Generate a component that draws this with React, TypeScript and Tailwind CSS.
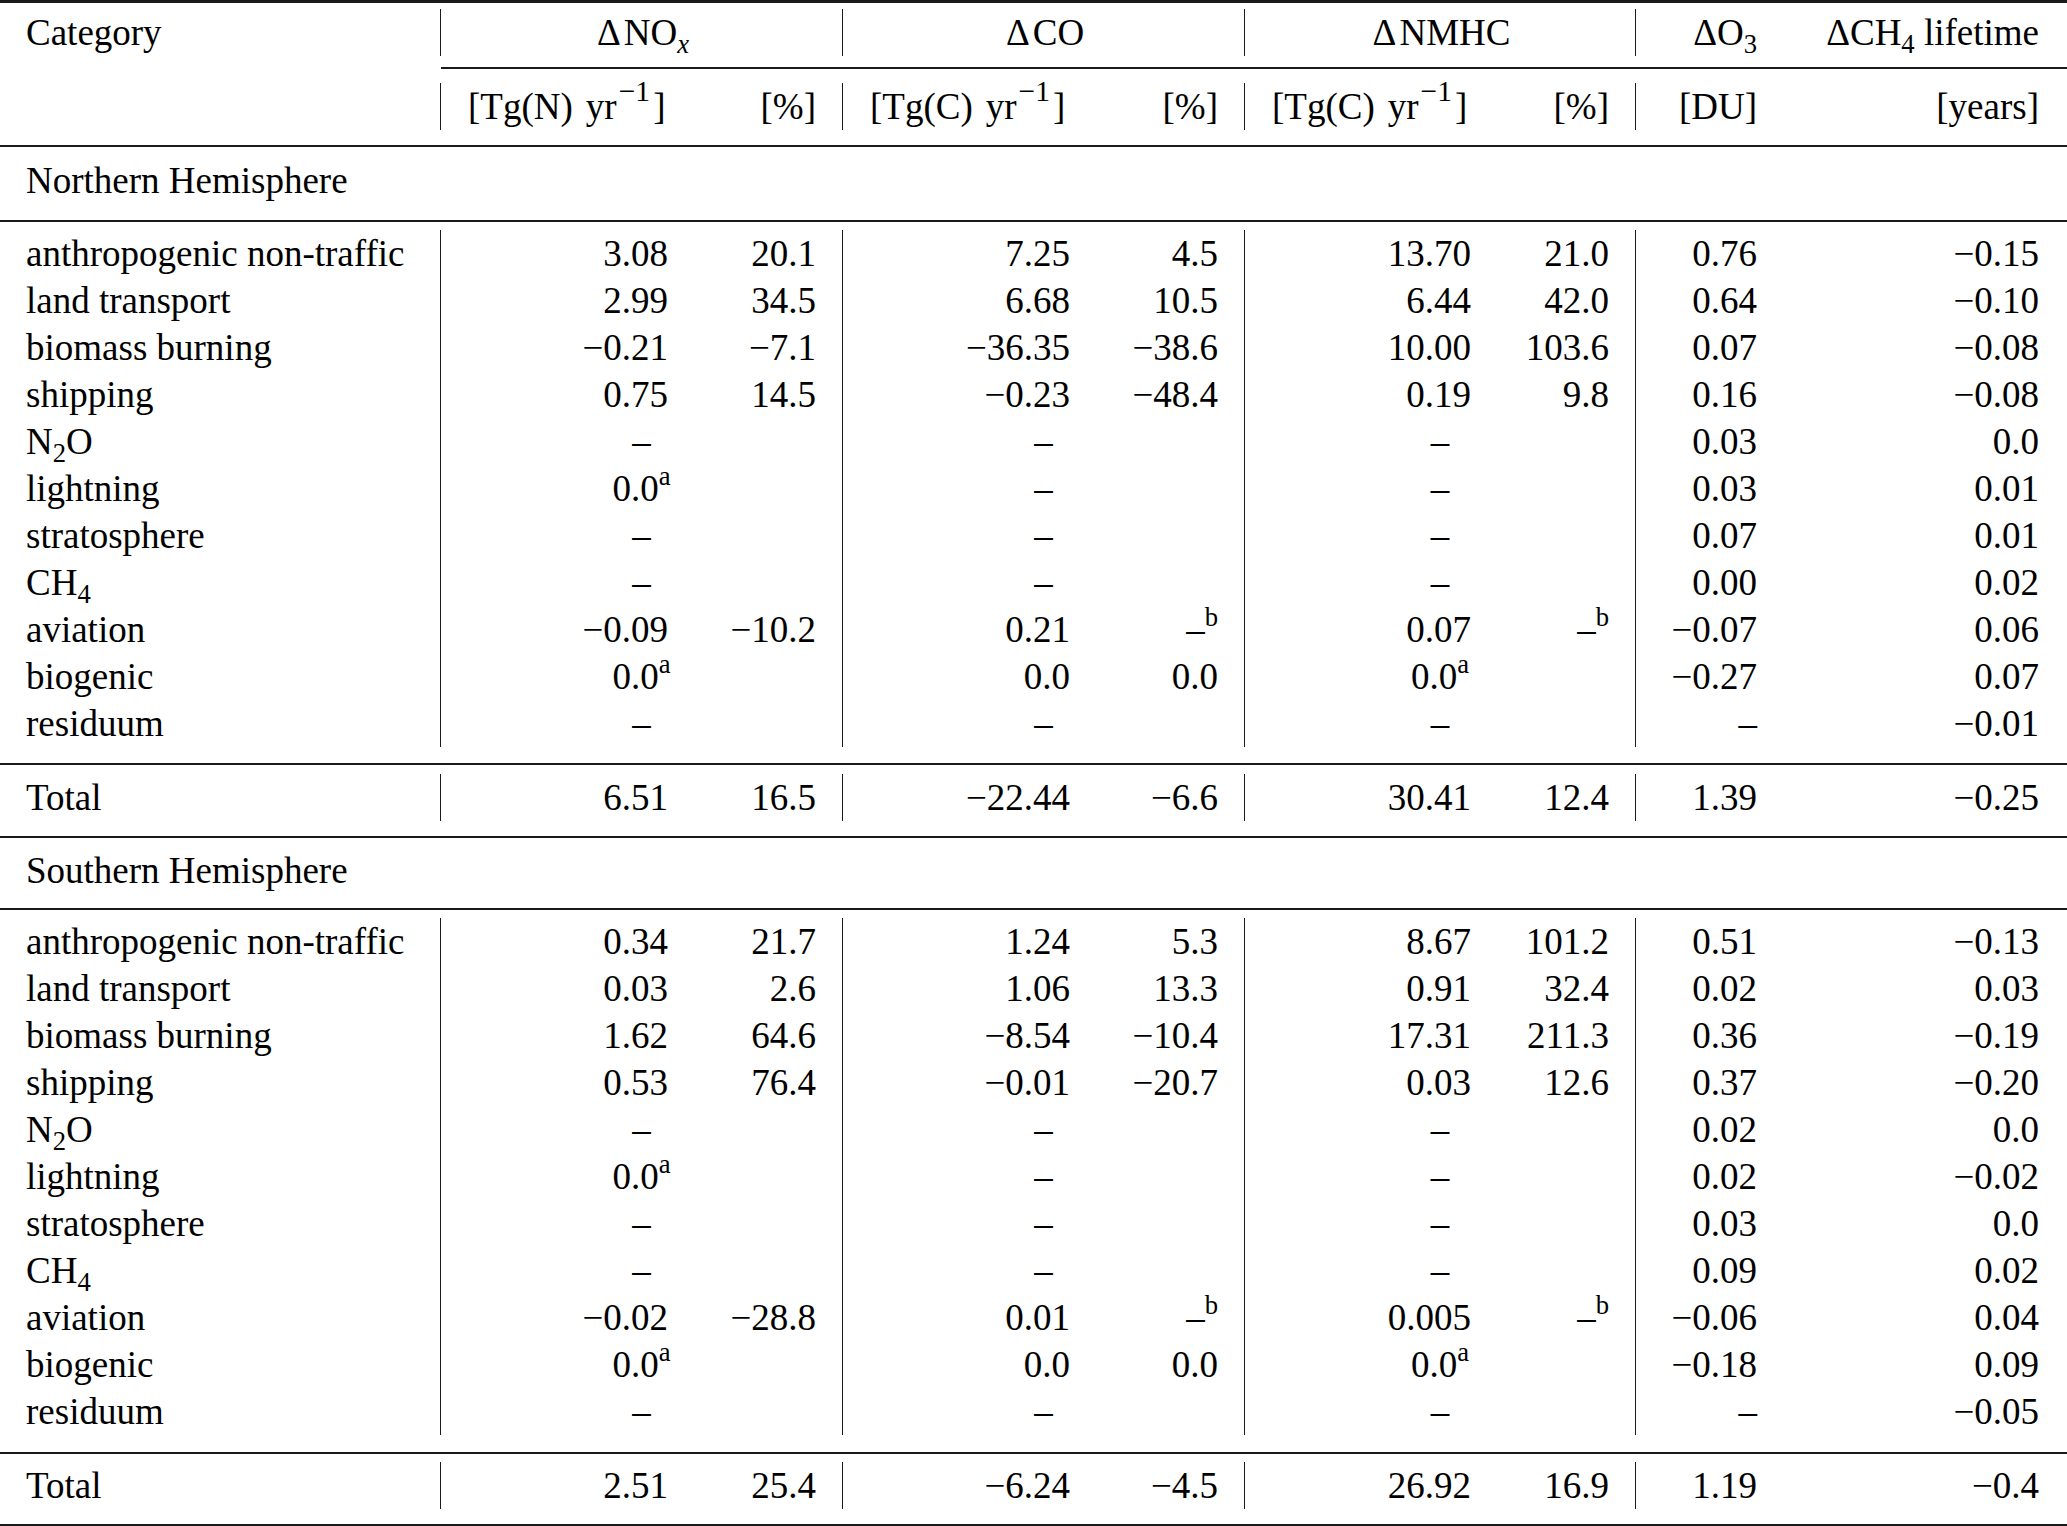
import React from "react";

type Cell = React.ReactNode;
type Group = [Cell, Cell] | { span: Cell };
type RowData = [Cell, Group, Group, Group, Cell, Cell];

const M = "\u2212";
const D = "\u2013";

const COLS =
  "grid grid-cols-[441px_253px_149px_253px_149px_252px_139px_147px_284px]";
const BAR = "border-r-[1.5px] border-[#1a1a1a]";

function Sup({ children }: { children: React.ReactNode }) {
  return <sup className="text-[0.72em] top-[-0.6em]">{children}</sup>;
}
function Sub({ children }: { children: React.ReactNode }) {
  return <sub className="text-[0.72em] bottom-[-0.3em]">{children}</sub>;
}
function Delta() {
  return <span className="inline-block w-[30px]">Δ</span>;
}

const A = (
  <>
    0.0<Sup>a</Sup>
  </>
);
const B = (
  <>
    {D}
    <Sup>b</Sup>
  </>
);
const N2O = (
  <>
    N<Sub>2</Sub>O
  </>
);
const CH4 = (
  <>
    CH<Sub>4</Sub>
  </>
);
const S = (c: Cell): Group => ({ span: c });

const north: RowData[] = [
  ["anthropogenic non-traffic", ["3.08", "20.1"], ["7.25", "4.5"], ["13.70", "21.0"], "0.76", M + "0.15"],
  ["land transport", ["2.99", "34.5"], ["6.68", "10.5"], ["6.44", "42.0"], "0.64", M + "0.10"],
  ["biomass burning", [M + "0.21", M + "7.1"], [M + "36.35", M + "38.6"], ["10.00", "103.6"], "0.07", M + "0.08"],
  ["shipping", ["0.75", "14.5"], [M + "0.23", M + "48.4"], ["0.19", "9.8"], "0.16", M + "0.08"],
  [N2O, S(D), S(D), S(D), "0.03", "0.0"],
  ["lightning", S(A), S(D), S(D), "0.03", "0.01"],
  ["stratosphere", S(D), S(D), S(D), "0.07", "0.01"],
  [CH4, S(D), S(D), S(D), "0.00", "0.02"],
  ["aviation", [M + "0.09", M + "10.2"], ["0.21", B], ["0.07", B], M + "0.07", "0.06"],
  ["biogenic", S(A), ["0.0", "0.0"], S(A), M + "0.27", "0.07"],
  ["residuum", S(D), S(D), S(D), D, M + "0.01"],
];
const northTotal: RowData = ["Total", ["6.51", "16.5"], [M + "22.44", M + "6.6"], ["30.41", "12.4"], "1.39", M + "0.25"];

const south: RowData[] = [
  ["anthropogenic non-traffic", ["0.34", "21.7"], ["1.24", "5.3"], ["8.67", "101.2"], "0.51", M + "0.13"],
  ["land transport", ["0.03", "2.6"], ["1.06", "13.3"], ["0.91", "32.4"], "0.02", "0.03"],
  ["biomass burning", ["1.62", "64.6"], [M + "8.54", M + "10.4"], ["17.31", "211.3"], "0.36", M + "0.19"],
  ["shipping", ["0.53", "76.4"], [M + "0.01", M + "20.7"], ["0.03", "12.6"], "0.37", M + "0.20"],
  [N2O, S(D), S(D), S(D), "0.02", "0.0"],
  ["lightning", S(A), S(D), S(D), "0.02", M + "0.02"],
  ["stratosphere", S(D), S(D), S(D), "0.03", "0.0"],
  [CH4, S(D), S(D), S(D), "0.09", "0.02"],
  ["aviation", [M + "0.02", M + "28.8"], ["0.01", B], ["0.005", B], M + "0.06", "0.04"],
  ["biogenic", S(A), ["0.0", "0.0"], S(A), M + "0.18", "0.09"],
  ["residuum", S(D), S(D), S(D), D, M + "0.05"],
];
const southTotal: RowData = ["Total", ["2.51", "25.4"], [M + "6.24", M + "4.5"], ["26.92", "16.9"], "1.19", M + "0.4"];

function GroupCells({ g }: { g: Group }) {
  if (Array.isArray(g)) {
    return (
      <>
        <div className="text-right pr-[26px] whitespace-nowrap">{g[0]}</div>
        <div className={`text-right pr-[26px] whitespace-nowrap ${BAR}`}>{g[1]}</div>
      </>
    );
  }
  return <div className={`col-span-2 text-center px-[26px] whitespace-nowrap ${BAR}`}>{g.span}</div>;
}

function Row({ r }: { r: RowData }) {
  return (
    <div className={`${COLS} h-[47px] leading-[47px]`}>
      <div className={`pl-[26px] whitespace-nowrap ${BAR}`}>{r[0]}</div>
      <GroupCells g={r[1]} />
      <GroupCells g={r[2]} />
      <GroupCells g={r[3]} />
      <div className="text-right pr-[26px] whitespace-nowrap">{r[4]}</div>
      <div className="text-right pr-[28px] whitespace-nowrap">{r[5]}</div>
    </div>
  );
}

const Rule = () => <div className="h-[2px] bg-[#1a1a1a]" />;
const ThickRule = () => <div className="h-[3px] bg-[#1a1a1a]" />;

function Unit({ n }: { n: string }) {
  return (
    <>
      [Tg({n})<span className="inline-block w-[13px]" />yr
      <sup className="text-[0.8em] top-[-0.6em] ml-[2px]">{M}1</sup>
      <span className="ml-[3px]">]</span>
    </>
  );
}

export default function App() {
  return (
    <div className="w-[2067px] bg-white text-black font-['Liberation_Serif','Times_New_Roman',serif] text-[37px]">
      <ThickRule />
      {/* header row 1 */}
      <div className="pt-[6px] pb-[11px]">
        <div className={`${COLS} h-[47px] leading-[47px]`}>
          <div className={`pl-[26px] ${BAR}`}>Category</div>
          <div className={`col-span-2 text-center px-[26px] whitespace-nowrap ${BAR}`}>
            <Delta />
            NO<sub className="text-[0.72em] bottom-[-0.3em] italic">x</sub>
          </div>
          <div className={`col-span-2 text-center px-[26px] whitespace-nowrap ${BAR}`}>
            <Delta />
            CO
          </div>
          <div className={`col-span-2 text-center px-[26px] whitespace-nowrap ${BAR}`}>
            <Delta />
            NMHC
          </div>
          <div className="text-right pr-[26px] whitespace-nowrap">
            <Delta />
            O<Sub>3</Sub>
          </div>
          <div className="text-right pr-[28px] whitespace-nowrap">
            <Delta />
            CH<Sub>4</Sub> lifetime
          </div>
        </div>
      </div>
      {/* cmidrule */}
      <div className={COLS}>
        <div />
        <div className="col-span-8 h-[2px] bg-[#1a1a1a]" />
      </div>
      {/* header row 2 */}
      <div className="pt-[14px] pb-[15px]">
        <div className={`${COLS} h-[47px] leading-[47px]`}>
          <div className={BAR} />
          <div className="pl-[27px] whitespace-nowrap">
            <Unit n="N" />
          </div>
          <div className={`text-right pr-[26px] ${BAR}`}>[%]</div>
          <div className="pl-[27px] whitespace-nowrap">
            <Unit n="C" />
          </div>
          <div className={`text-right pr-[26px] ${BAR}`}>[%]</div>
          <div className="pl-[27px] whitespace-nowrap">
            <Unit n="C" />
          </div>
          <div className={`text-right pr-[26px] ${BAR}`}>[%]</div>
          <div className="text-right pr-[26px]">[DU]</div>
          <div className="text-right pr-[28px]">[years]</div>
        </div>
      </div>
      <Rule />
      <div className="pt-[10px] pb-[16px] h-[73px]">
        <div className="pl-[26px] h-[47px] leading-[47px]">Northern Hemisphere</div>
      </div>
      <Rule />
      <div className="pt-[8px] pb-[16px]">
        {north.map((r, i) => (
          <Row key={i} r={r} />
        ))}
      </div>
      <Rule />
      <div className="pt-[9px] pb-[15px]">
        <Row r={northTotal} />
      </div>
      <Rule />
      <div className="pt-[9px] pb-[14px]">
        <div className="pl-[26px] h-[47px] leading-[47px]">Southern Hemisphere</div>
      </div>
      <Rule />
      <div className="pt-[8px] pb-[17px]">
        {south.map((r, i) => (
          <Row key={i} r={r} />
        ))}
      </div>
      <Rule />
      <div className="pt-[8px] pb-[15px]">
        <Row r={southTotal} />
      </div>
      <ThickRule />
    </div>
  );
}
